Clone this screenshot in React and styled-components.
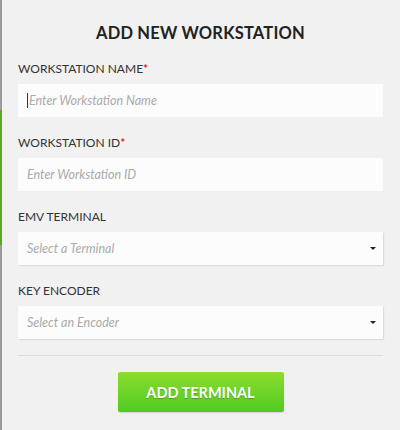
import React from 'react'
import styled, { createGlobalStyle } from 'styled-components'

const Global = createGlobalStyle`
  html, body {
    margin: 0;
    padding: 0;
    background: #f1f1f1;
  }
  body {
    font-family: Lato, "Open Sans", "Liberation Sans", sans-serif;
  }
`

const Page = styled.div`
  display: flex;
  width: 400px;
  height: 430px;
  background: #f1f1f1;
`

const Edge = styled.div`
  width: 2px;
  display: flex;
  flex-direction: column;
  background: #9a9a9a;

  span {
    margin-top: 110px;
    height: 135px;
    background: #5aa82a;
  }
`

const Form = styled.form`
  flex: 1;
  padding: 23px 17px 0 16px;
  display: flex;
  flex-direction: column;
`

const Title = styled.h2`
  margin: 0 0 18px;
  text-align: center;
  font-size: 16.5px;
  line-height: 20px;
  font-weight: 700;
  color: #222;
  letter-spacing: 0.2px;
`

const Field = styled.div`
  display: flex;
  flex-direction: column;
  margin-bottom: 18px;
`

const Label = styled.label`
  font-size: 12px;
  color: #333;
  margin-bottom: 8px;
  line-height: 15px;

  b {
    color: #e0262a;
    font-weight: 700;
  }
`

const Input = styled.div`
  height: 33px;
  background: #fcfcfc;
  display: flex;
  align-items: center;
  padding: 0 9px;
  box-shadow: ${({ $select }) => ($select ? '1px 1px 1px #dcdcdc' : 'none')};
  font-size: 12.5px;
  font-style: italic;
  color: #aaa;

  i {
    width: 1px;
    height: 15px;
    background: #333;
    margin-right: 1px;
  }
`

const Caret = styled.span`
  margin-left: auto;
  margin-right: -2px;
  width: 0;
  height: 0;
  border-left: 3px solid transparent;
  border-right: 3px solid transparent;
  border-top: 3px solid #222;
`

const Divider = styled.hr`
  border: none;
  border-top: 1px solid #dcdcdc;
  margin: -2px 0 16px;
`

const Button = styled.button`
  align-self: center;
  width: 166px;
  height: 40px;
  border: none;
  border-radius: 2px;
  background: linear-gradient(#8ddc2e, #4fcb22);
  color: #fff;
  font-family: inherit;
  font-size: 14.5px;
  font-weight: 700;
  text-shadow: 0 1px 1px rgba(0, 0, 0, 0.25);
  box-shadow: 0 1px 1px rgba(0, 0, 0, 0.12);
`

const fields = [
  { label: 'WORKSTATION NAME', req: true, ph: 'Enter Workstation Name', cursor: true },
  { label: 'WORKSTATION ID', req: true, ph: 'Enter Workstation ID' },
  { label: 'EMV TERMINAL', ph: 'Select a Terminal', select: true },
  { label: 'KEY ENCODER', ph: 'Select an Encoder', select: true },
]

export default function App() {
  return (
    <>
      <Global />
      <Page>
        <Edge><span /></Edge>
        <Form onSubmit={e => e.preventDefault()}>
          <Title>ADD NEW WORKSTATION</Title>
          {fields.map(f => (
            <Field key={f.label}>
              <Label>
                {f.label}
                {f.req && <b>*</b>}
              </Label>
              <Input $select={f.select}>
                {f.cursor && <i />}
                {f.ph}
                {f.select && <Caret />}
              </Input>
            </Field>
          ))}
          <Divider />
          <Button type="button">ADD TERMINAL</Button>
        </Form>
      </Page>
    </>
  )
}
